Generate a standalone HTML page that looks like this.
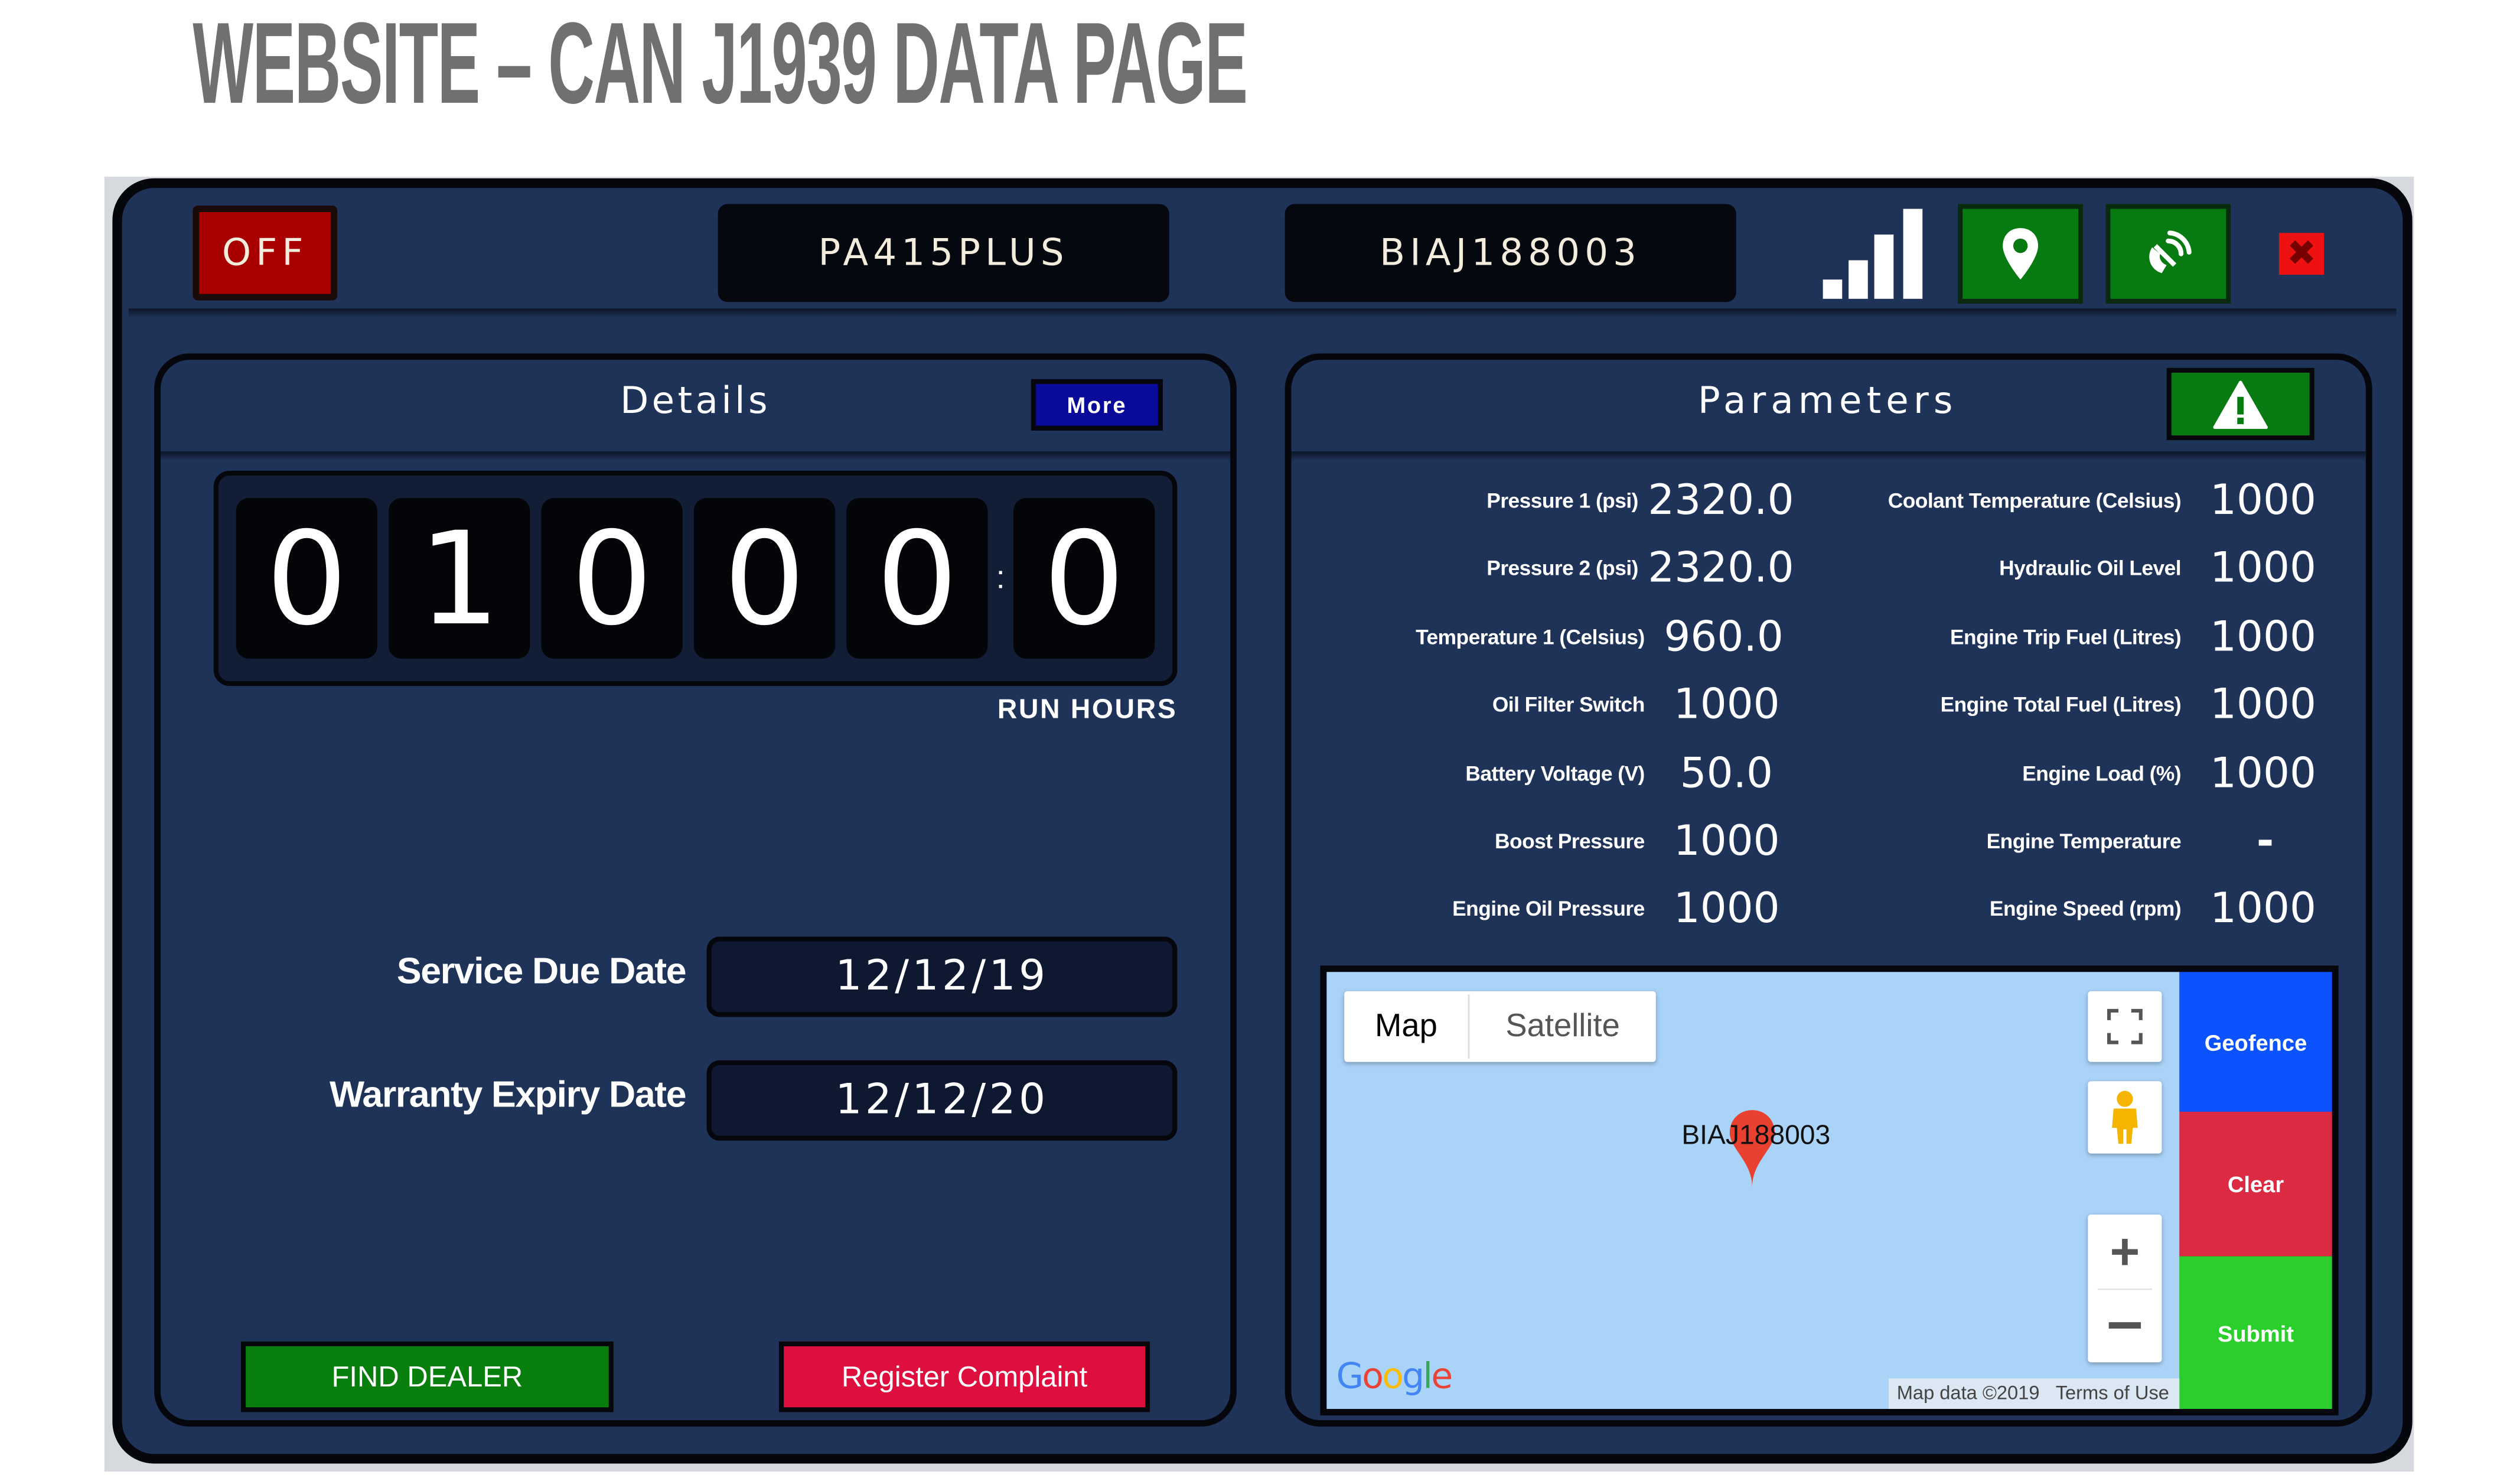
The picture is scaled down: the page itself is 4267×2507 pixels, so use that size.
<!DOCTYPE html>
<html><head><meta charset="utf-8"><style>
html,body{margin:0;padding:0;background:#fff;width:4267px;height:2506px;overflow:hidden}
#s{position:absolute;left:0;top:0;width:1570px;height:922px;transform:scale(2.7195);transform-origin:0 0;font-family:"Liberation Sans","DejaVu Sans",sans-serif}
.a{position:absolute;box-sizing:border-box}
.title{left:120px;top:4px;font-family:"Liberation Sans Narrow","Liberation Sans",sans-serif;font-weight:bold;color:#707070;font-size:72px;line-height:72px;white-space:nowrap;transform:scaleX(0.556);transform-origin:0 0;letter-spacing:-1px}
.c{display:flex;align-items:center;justify-content:center;color:#f4ecdc}
.blk{background:#05080f;border-radius:6px;font-family:"DejaVu Sans",sans-serif;font-size:23px;letter-spacing:3px}
.dig{background:#030508;border-radius:8px;color:#fff;font-family:"DejaVu Sans",sans-serif;font-size:80px;top:310px;height:100px;width:88px}
.lab{color:#fff;font-size:13px;text-align:right;font-weight:bold;letter-spacing:-0.2px}
.val{color:#fff;font-size:26px;font-family:"DejaVu Sans",sans-serif}
.row{position:absolute;height:30px;line-height:30px}
.wb{background:#fff;box-shadow:0 1px 3px rgba(0,0,0,.3);border-radius:2px}
</style></head><body><div id="s">
<div class="a title">WEBSITE – CAN J1939 DATA PAGE</div>
<div class="a" style="left:65px;top:110px;width:1438px;height:806px;background:#d6d9de"></div>
<div class="a" style="left:70px;top:111px;width:1432px;height:800px;background:#1f3359;border:6px solid #05070c;border-radius:26px"></div>
<div class="a" style="left:80px;top:192px;width:1412px;height:6px;background:linear-gradient(#0c1528,#1f3359)"></div>
<!-- header -->
<div class="a c" style="left:120px;top:128px;width:90px;height:59px;background:#a80000;border:4px solid #1a0a0a;border-radius:3px;font-family:'DejaVu Sans',sans-serif;font-size:23px;letter-spacing:3px">OFF</div>
<div class="a c blk" style="left:447px;top:127px;width:281px;height:61px">PA415PLUS</div>
<div class="a c blk" style="left:800px;top:127px;width:281px;height:61px">BIAJ188003</div>
<div class="a" style="left:1135px;top:174px;width:12px;height:12px;background:#fff"></div>
<div class="a" style="left:1151px;top:162px;width:12px;height:24px;background:#fff"></div>
<div class="a" style="left:1167px;top:146px;width:12px;height:40px;background:#fff"></div>
<div class="a" style="left:1185px;top:130px;width:12px;height:56px;background:#fff"></div>
<div class="a c" style="left:1219px;top:127px;width:78px;height:62px;background:#087a12;border:3px solid #0a2a10">
<svg width="26" height="34" viewBox="0 0 26 34"><path d="M13 1C6 1 2 6 2 12c0 8 11 21 11 21s11-13 11-21C24 6 20 1 13 1z" fill="#fff"/><circle cx="13" cy="12" r="4.5" fill="#087a12"/></svg></div>
<div class="a c" style="left:1311px;top:127px;width:78px;height:62px;background:#087a12;border:3px solid #0a2a10">
<svg width="36" height="36" viewBox="0 0 36 36"><path d="M8 14c-4 6-1 14 6 16l3-5c-3-1-5-4-4-7z" fill="#fff"/><path d="M10 13l12 12" stroke="#fff" stroke-width="3"/><path d="M18 10a8 8 0 0 1 8 8M19 5a13 13 0 0 1 12 12" stroke="#fff" stroke-width="3" fill="none" stroke-linecap="round"/></svg></div>
<div class="a c" style="left:1419px;top:145px;width:28px;height:26px;background:#ee1111;color:#700;font-weight:bold;font-size:22px">✖</div>
<!-- details -->
<div class="a" style="left:96px;top:220px;width:674px;height:668px;border:4px solid #05070c;border-radius:22px;background:#1f3359"></div>
<div class="a" style="left:100px;top:281px;width:666px;height:6px;background:linear-gradient(#0c1528,#1f3359)"></div>
<div class="a c" style="left:300px;top:232px;width:266px;height:36px;font-size:23px;letter-spacing:2px;color:#fff;font-family:'DejaVu Sans',sans-serif">Details</div>
<div class="a c" style="left:642px;top:236px;width:82px;height:32px;background:#0a0a9a;border:3px solid #05070c;font-size:14px;font-weight:bold;letter-spacing:1px;color:#fff">More</div>
<div class="a" style="left:133px;top:293px;width:600px;height:134px;background:#111e36;border:3px solid #05070c;border-radius:10px"></div>
<div class="a c dig" style="left:147px">0</div>
<div class="a c dig" style="left:242px">1</div>
<div class="a c dig" style="left:337px">0</div>
<div class="a c dig" style="left:432px">0</div>
<div class="a c dig" style="left:527px">0</div>
<div class="a c" style="left:615px;top:340px;width:16px;height:40px;color:#fff;font-size:20px">:</div>
<div class="a c dig" style="left:631px">0</div>
<div class="a" style="left:560px;top:432px;width:173px;text-align:right;color:#fff;font-weight:bold;font-size:17px;letter-spacing:1px">RUN HOURS</div>
<div class="a" style="left:120px;top:591px;width:307px;text-align:right;color:#fff;font-size:23px;font-weight:bold;letter-spacing:-0.5px">Service Due Date</div>
<div class="a" style="left:120px;top:668px;width:307px;text-align:right;color:#fff;font-size:23px;font-weight:bold;letter-spacing:-0.5px">Warranty Expiry Date</div>
<div class="a c" style="left:440px;top:583px;width:293px;height:50px;background:#0e1830;border:3px solid #05070c;border-radius:8px;color:#fff;font-size:26px;letter-spacing:2px;font-family:'DejaVu Sans',sans-serif">12/12/19</div>
<div class="a c" style="left:440px;top:660px;width:293px;height:50px;background:#0e1830;border:3px solid #05070c;border-radius:8px;color:#fff;font-size:26px;letter-spacing:2px;font-family:'DejaVu Sans',sans-serif">12/12/20</div>
<div class="a c" style="left:150px;top:835px;width:232px;height:44px;background:#087f0c;border:3px solid #05070c;color:#fff;font-size:18px">FIND DEALER</div>
<div class="a c" style="left:485px;top:835px;width:231px;height:44px;background:#de0f3e;border:3px solid #05070c;color:#fff;font-size:18px">Register Complaint</div>
<!-- parameters -->
<div class="a" style="left:800px;top:220px;width:677px;height:668px;border:4px solid #05070c;border-radius:22px;background:#1f3359"></div>
<div class="a" style="left:804px;top:281px;width:669px;height:6px;background:linear-gradient(#0c1528,#1f3359)"></div>
<div class="a c" style="left:1000px;top:232px;width:276px;height:36px;font-size:23px;letter-spacing:3px;color:#fff;font-family:'DejaVu Sans',sans-serif">Parameters</div>
<div class="a c" style="left:1349px;top:229px;width:92px;height:45px;background:#087a12;border:3px solid #05070c">
<svg width="34" height="30" viewBox="0 0 34 30"><path d="M17 1L33 29H1z" fill="#fff" stroke="#fff" stroke-linejoin="round" stroke-width="2"/><rect x="15" y="10" width="4" height="11" fill="#087a12"/><rect x="15" y="23" width="4" height="4" fill="#087a12"/></svg></div>

<div class="row lab" style="left:820px;top:297px;width:200px">Pressure 1 (psi)</div><div class="row val" style="left:1026px;top:297px">2320.0</div>
<div class="row lab" style="left:820px;top:339px;width:200px">Pressure 2 (psi)</div><div class="row val" style="left:1026px;top:339px">2320.0</div>
<div class="row lab" style="left:820px;top:382px;width:204px">Temperature 1 (Celsius)</div><div class="row val" style="left:1036px;top:382px">960.0</div>
<div class="row lab" style="left:820px;top:424px;width:204px">Oil Filter Switch</div><div class="row val" style="left:1042px;top:424px">1000</div>
<div class="row lab" style="left:820px;top:467px;width:204px">Battery Voltage (V)</div><div class="row val" style="left:1046px;top:467px">50.0</div>
<div class="row lab" style="left:820px;top:509px;width:204px">Boost Pressure</div><div class="row val" style="left:1042px;top:509px">1000</div>
<div class="row lab" style="left:820px;top:551px;width:204px">Engine Oil Pressure</div><div class="row val" style="left:1042px;top:551px">1000</div>

<div class="row lab" style="left:1130px;top:297px;width:228px">Coolant Temperature (Celsius)</div><div class="row val" style="left:1376px;top:297px">1000</div>
<div class="row lab" style="left:1130px;top:339px;width:228px">Hydraulic Oil Level</div><div class="row val" style="left:1376px;top:339px">1000</div>
<div class="row lab" style="left:1130px;top:382px;width:228px">Engine Trip Fuel (Litres)</div><div class="row val" style="left:1376px;top:382px">1000</div>
<div class="row lab" style="left:1130px;top:424px;width:228px">Engine Total Fuel (Litres)</div><div class="row val" style="left:1376px;top:424px">1000</div>
<div class="row lab" style="left:1130px;top:467px;width:228px">Engine Load (%)</div><div class="row val" style="left:1376px;top:467px">1000</div>
<div class="row lab" style="left:1130px;top:509px;width:228px">Engine Temperature</div><div class="row val" style="left:1405px;top:509px;font-weight:bold">-</div>
<div class="row lab" style="left:1130px;top:551px;width:228px">Engine Speed (rpm)</div><div class="row val" style="left:1376px;top:551px">1000</div>
<!-- map -->
<div class="a" style="left:822px;top:601px;width:634px;height:280px;background:#05070c"></div>
<div class="a" style="left:826px;top:605px;width:531px;height:272px;background:#aad3f8"></div>
<div class="a c" style="left:1357px;top:605px;width:95px;height:87px;background:#0c52ff;color:#fff;font-weight:bold;font-size:14px">Geofence</div>
<div class="a c" style="left:1357px;top:692px;width:95px;height:90px;background:#dc2a42;color:#fff;font-weight:bold;font-size:14px">Clear</div>
<div class="a c" style="left:1357px;top:782px;width:95px;height:95px;background:#2bcf2b;color:#fff;font-weight:bold;font-size:14px">Submit</div>
<div class="a wb" style="left:837px;top:617px;width:194px;height:44px"></div>
<div class="a c" style="left:837px;top:617px;width:77px;height:44px;color:#000;font-size:20px">Map</div>
<div class="a" style="left:914px;top:619px;width:1px;height:40px;background:#ddd"></div>
<div class="a c" style="left:915px;top:617px;width:116px;height:44px;color:#555;font-size:20px">Satellite</div>
<div class="a wb c" style="left:1300px;top:617px;width:46px;height:44px"><svg width="22" height="22" viewBox="0 0 22 22" fill="none" stroke="#555" stroke-width="2.5"><path d="M1 7V1h6M15 1h6v6M21 15v6h-6M7 21H1v-6"/></svg></div>
<div class="a wb c" style="left:1300px;top:673px;width:46px;height:45px"><svg width="20" height="36" viewBox="0 0 20 36"><circle cx="10" cy="6" r="5" fill="#f5b400"/><path d="M3 12h14l1 12h-3l-1 10h-3v-9h-2v9H6L5 24H2z" fill="#f5b400"/></svg></div>
<div class="a wb" style="left:1300px;top:756px;width:46px;height:92px"></div>
<div class="a c" style="left:1300px;top:756px;width:46px;height:46px;color:#555;font-size:32px;font-weight:bold">+</div>
<div class="a" style="left:1306px;top:802px;width:34px;height:1px;background:#e6e6e6"></div>
<div class="a" style="left:1313px;top:823px;width:20px;height:4px;background:#555"></div>
<svg class="a" style="left:1076px;top:690px" width="30" height="50" viewBox="0 0 30 50"><path d="M15 1C7 1 1 7 1 15c0 10 14 18 14 34 0-16 14-24 14-34C29 7 23 1 15 1z" fill="#e8412f"/></svg>
<div class="a" style="left:1047px;top:697px;font-family:'Liberation Sans Narrow','Liberation Sans',sans-serif;font-size:17px;color:#111">BIAJ188003</div>
<div class="a" style="left:832px;top:845px;font-size:22px;font-family:'DejaVu Sans',sans-serif;letter-spacing:-1px"><span style="color:#4285f4">G</span><span style="color:#ea4335">o</span><span style="color:#fbbc05">o</span><span style="color:#4285f4">g</span><span style="color:#34a853">l</span><span style="color:#ea4335">e</span></div>
<div class="a" style="left:1176px;top:858px;width:181px;height:19px;background:rgba(240,240,240,.7);font-family:'Liberation Sans Narrow','Liberation Sans',sans-serif;font-size:12px;color:#444;line-height:19px;padding-left:5px">Map data ©2019 &nbsp;&nbsp;Terms of Use</div>
</div></body></html>
